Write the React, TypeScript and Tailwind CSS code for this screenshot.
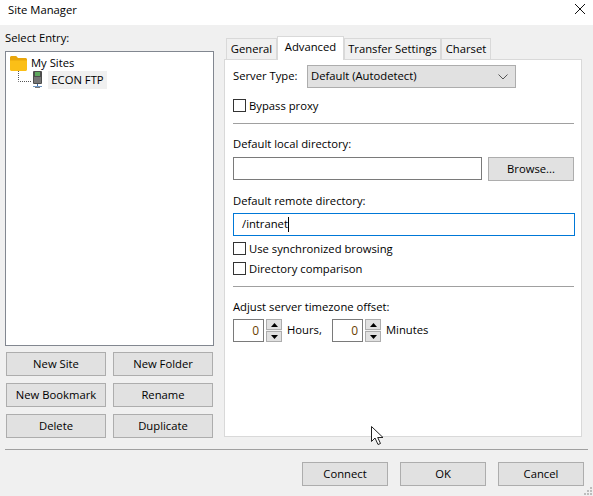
import type { ReactNode } from 'react';

const font = "[font-family:'Open_Sans','Noto_Sans',sans-serif]";

function WinButton({ children, className = '' }: { children: ReactNode; className?: string }) {
    return (
        <button className={`h-6 flex items-center justify-center bg-[#e1e1e1] border border-[#adadad] text-[11.25px] text-black ${className}`}>
            {children}
        </button>
    );
}

function CheckRow({ label, className = '' }: { label: string; className?: string }) {
    return (
        <div className={`flex items-center h-[13px] ${className}`}>
            <span className="w-[13px] h-[13px] bg-white border border-[#333333] shrink-0" />
            <span className="ml-[3px] text-[11.25px] leading-[13px]">{label}</span>
        </div>
    );
}

function Spinner({ unit, className = '' }: { unit: string; className?: string }) {
    return (
        <div className={`flex items-center h-[23px] ${className}`}>
            <div className="w-[31px] h-[23px] bg-white border border-[#7a7a7a] flex items-center justify-end pr-[4px] text-[12px] text-[#6b3f00]">0</div>
            <div className="ml-[2px] w-4 h-[23px] flex flex-col justify-between bg-[#f0f0f0]">
                <div className="h-[11px] bg-[#e1e1e1] border border-[#adadad] flex items-center justify-center">
                    <svg width="7" height="4" viewBox="0 0 7 4"><path d="M3.5 0 7 4H0z" fill="#000" /></svg>
                </div>
                <div className="h-[11px] bg-[#e1e1e1] border border-[#adadad] flex items-center justify-center">
                    <svg width="7" height="4" viewBox="0 0 7 4"><path d="M0 0h7L3.5 4z" fill="#000" /></svg>
                </div>
            </div>
            <span className="ml-[5px] text-[11.25px]">{unit}</span>
        </div>
    );
}

function Tab({ label, active = false, className = '' }: { label: string; active?: boolean; className?: string }) {
    return active ? (
        <div className={`h-[24px] -mb-px z-10 bg-white border border-b-0 border-[#d9d9d9] flex items-center justify-center text-[11.25px] pb-[3px] ${className}`}>
            {label}
        </div>
    ) : (
        <div className={`h-[21px] bg-[#f0f0f0] border border-b-0 border-[#d9d9d9] flex items-center justify-center text-[11.25px] ${className}`}>
            {label}
        </div>
    );
}

export default function App() {
    return (
        <div className={`relative w-[593px] h-[496px] overflow-hidden bg-[#f0f0f0] text-black flex flex-col ${font}`}>
            {/* Title bar */}
            <div className="h-[25px] bg-white flex items-start justify-between pl-2 pr-[7px] pt-[1px] shrink-0">
                <span className="text-[11.25px] leading-[17px]">Site Manager</span>
                <svg width="12" height="12" viewBox="0 0 12 12" className="mt-[2px]">
                    <path d="M1 1l10 10M11 1 1 11" stroke="#111" strokeWidth="1" fill="none" />
                </svg>
            </div>

            <div className="flex h-[424px] pl-[5px] shrink-0">
                {/* Left column */}
                <div className="w-[209px] flex flex-col">
                    <div className="h-[26px] flex items-center text-[11.25px]">Select Entry:</div>
                    <div className="h-[295px] bg-white border border-[#828790] pt-[3px] pl-[4px]">
                        <div className="flex items-center h-[16px]">
                            <svg width="17" height="15" viewBox="0 0 17 15">
                                <path d="M0 1.5C0 .7.7 0 1.500 0h4.700l1.800 2h7.500c.8 0 1.500.7 1.500 1.500V5H0z" fill="#e9a60c" />
                                <path d="M0 4.500h17v9c0 .8-.7 1.500-1.500 1.500h-14C.7 15 0 14.300 0 13.500z" fill="#fbbf17" />
                            </svg>
                            <span className="ml-[4px] text-[11.25px]">My Sites</span>
                        </div>
                        <div className="flex items-center h-[18px]">
                            <svg width="38" height="18" viewBox="0 0 38 18">
                                <path d="M8.500 0v10.500H21" stroke="#555" strokeDasharray="1 1" fill="none" />
                                <rect x="23" y="0" width="9" height="13" rx="1" fill="#4d4d4d" />
                                <rect x="25" y="1" width="5" height="4" fill="#5fa85f" />
                                <rect x="24" y="6" width="7" height="6" fill="#757575" />
                                <rect x="27" y="13" width="1" height="3" fill="#3f6fa8" />
                                <rect x="23" y="15" width="9" height="1" fill="#6f97c4" />
                                <rect x="25" y="16" width="5" height="1" fill="#777" />
                            </svg>
                            <span className="w-[59px] h-[18px] bg-[#f0f0f0] flex items-center justify-center text-[11.25px]">ECON FTP</span>
                        </div>
                    </div>
                    <div className="grid grid-cols-[100px_100px] gap-x-[7px] gap-y-[7px] mt-[6px] ml-[1px]">
                        <WinButton>New Site</WinButton>
                        <WinButton>New Folder</WinButton>
                        <WinButton>New Bookmark</WinButton>
                        <WinButton>Rename</WinButton>
                        <WinButton>Delete</WinButton>
                        <WinButton>Duplicate</WinButton>
                    </div>
                </div>

                {/* Right column */}
                <div className="ml-[10px] w-[358px] flex flex-col pt-[11px]">
                    <div className="flex items-end h-[23px] pl-[2px]">
                        <Tab label="General" className="w-[51px]" />
                        <Tab label="Advanced" active className="w-[67px]" />
                        <Tab label="Transfer Settings" className="w-[97px]" />
                        <Tab label="Charset" className="w-[50px]" />
                    </div>
                    <div className="h-[378px] bg-white border border-[#d9d9d9] pl-2 pt-[5px] text-[11.25px]">
                        <div className="flex items-center h-[23px]">
                            <span className="w-[74px]">Server Type:</span>
                            <div className="w-[209px] h-[23px] bg-[#e1e1e1] border border-[#adadad] flex items-center justify-between pl-[3px] pr-[7px]">
                                <span>Default (Autodetect)</span>
                                <svg width="10" height="6" viewBox="0 0 10 6"><path d="M.5.500 5 5 9.500.500" stroke="#555" fill="none" /></svg>
                            </div>
                        </div>
                        <CheckRow label="Bypass proxy" className="mt-[11px]" />
                        <div className="h-px w-[341px] bg-[#a0a0a0] mt-[11px]" />
                        <div className="h-[17px] leading-[17px] mt-[11px]">Default local directory:</div>
                        <div className="flex mt-[5px] w-[341px] justify-between">
                            <div className="w-[249px] h-[23px] bg-white border border-[#7a7a7a]" />
                            <WinButton className="w-[86px]">Browse...</WinButton>
                        </div>
                        <div className="h-[17px] leading-[17px] mt-[11px]">Default remote directory:</div>
                        <div className="w-[342px] h-[23px] bg-white border border-[#0078d7] mt-[4px] pl-[8px] flex items-center">
                            <span>/intranet</span>
                            <span className="w-px h-[15px] bg-black" />
                        </div>
                        <CheckRow label="Use synchronized browsing" className="mt-[6px]" />
                        <CheckRow label="Directory comparison" className="mt-[7px]" />
                        <div className="h-px w-[341px] bg-[#a0a0a0] mt-[11px]" />
                        <div className="h-[17px] leading-[17px] mt-[11px]">Adjust server timezone offset:</div>
                        <div className="flex mt-[4px]">
                            <Spinner unit="Hours," className="w-[99px]" />
                            <Spinner unit="Minutes" />
                        </div>
                    </div>
                </div>
            </div>

            {/* Footer */}
            <div className="h-px w-[583px] ml-[5px] bg-[#a0a0a0] shrink-0" />
            <div className="flex justify-end gap-3 pr-[9px] pt-3">
                <WinButton className="w-[86px]">Connect</WinButton>
                <WinButton className="w-[86px]">OK</WinButton>
                <WinButton className="w-[86px]">Cancel</WinButton>
            </div>

            {/* Resize grip */}
            <svg width="10" height="10" viewBox="0 0 10 10" className="absolute right-0 bottom-0">
                <path d="M7 1h2v2H7zM4 4h2v2H4zM7 4h2v2H7zM1 7h2v2H1zM4 7h2v2H4zM7 7h2v2H7z" fill="#bdbdbd" />
            </svg>

            {/* Mouse cursor */}
            <svg width="14" height="20" viewBox="0 0 14 20" className="absolute left-[371px] top-[426px]">
                <path d="M.5.500v15l3.500-3.500 3 6.500 2.500-1-2.800-6H12z" fill="#fff" stroke="#222" strokeWidth="1" strokeLinejoin="miter" />
            </svg>
        </div>
    );
}
